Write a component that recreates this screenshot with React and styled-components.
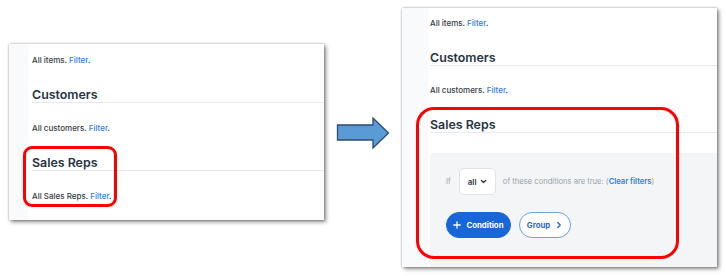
import React from 'react'
import styled, { createGlobalStyle } from 'styled-components'

const GlobalStyle = createGlobalStyle`
  html, body {
    margin: 0;
    padding: 0;
    background: #fff;
  }
  body {
    font-family: Inter, 'Liberation Sans', sans-serif;
    width: 726px;
    height: 276px;
    overflow: hidden;
  }
`

const Stage = styled.div`
  display: flex;
  align-items: flex-start;
  width: 726px;
  height: 276px;
`

const Shot = styled.div`
  position: relative;
  flex: none;
  display: flex;
  width: 315px;
  height: ${(p) => p.$h}px;
  margin: ${(p) => p.$top}px 0 0 ${(p) => p.$left}px;
  background: #fff;
  box-shadow: 2px 2px 4px rgba(0, 0, 0, 0.45), 0 0 2px rgba(0, 0, 0, 0.35);
  overflow: hidden;
`

const Gutter = styled.div`
  flex: none;
  width: ${(p) => p.$w}px;
  background: #f9fafb;
`

const Content = styled.div`
  flex: 1;
  display: flex;
  flex-direction: column;
  padding-top: ${(p) => p.$top}px;
  padding-left: ${(p) => p.$left}px;
`

const Desc = styled.div`
  font-size: 8px;
  line-height: 12px;
  font-weight: 500;
  color: #353c44;
  margin-top: ${(p) => p.$mt || 0}px;
  white-space: nowrap;
`

const Link = styled.span`
  color: #2f7de1;
  font-weight: ${(p) => (p.$bold ? 600 : 500)};
`

const Heading = styled.div`
  font-size: 12.4px;
  line-height: 15px;
  font-weight: 600;
  color: #263442;
  margin-top: 21px;
  border-bottom: 1px solid #e6eaee;
`

const FilterBox = styled.div`
  flex: 1;
  margin-top: 20px;
  padding: 15px 0 0 16px;
  background: #f3f5f6;
  border-top-left-radius: 4px;
  display: flex;
  flex-direction: column;
  gap: 17px;
`

const CondRow = styled.div`
  display: flex;
  align-items: center;
  gap: 7px;
  font-size: 7.6px;
  color: #9aa2aa;
  white-space: nowrap;
`

const Select = styled.div`
  width: 37px;
  height: 27px;
  box-sizing: border-box;
  display: flex;
  align-items: center;
  justify-content: space-between;
  padding: 0 8px 0 8px;
  margin-left: 1px;
  background: #fff;
  border: 1px solid #dfe4ea;
  border-radius: 5px;
  font-size: 7.8px;
  font-weight: 600;
  color: #2b333b;
`

const Buttons = styled.div`
  display: flex;
  gap: 8px;
`

const Pill = styled.div`
  height: 26px;
  box-sizing: border-box;
  display: flex;
  align-items: center;
  justify-content: center;
  gap: 5px;
  border-radius: 13px;
  font-size: 7.8px;
  font-weight: 700;
  width: ${(p) => p.$w}px;
  background: ${(p) => (p.$primary ? '#1866d8' : '#fff')};
  color: ${(p) => (p.$primary ? '#fff' : '#2d66c9')};
  border: 1px solid ${(p) => (p.$primary ? '#1866d8' : '#6f9ee6')};
`

const Highlight = styled.div`
  position: absolute;
  left: ${(p) => p.$x}px;
  top: ${(p) => p.$y}px;
  width: ${(p) => p.$w}px;
  height: ${(p) => p.$h}px;
  box-sizing: border-box;
  border: ${(p) => p.$b}px solid #ff0000;
  border-radius: ${(p) => p.$r}px;
`

const ArrowSvg = styled.svg`
  flex: none;
  margin: 116px 0 0 12px;
`

const Chevron = ({ dir = 'down', color, size = 7 }) => (
  <svg width={size} height={size} viewBox="0 0 10 10">
    <polyline
      points={dir === 'down' ? '2,3.5 5,6.5 8,3.5' : '3.5,2 6.5,5 3.5,8'}
      fill="none"
      stroke={color}
      strokeWidth="1.8"
      strokeLinecap="round"
      strokeLinejoin="round"
    />
  </svg>
)

const Plus = () => (
  <svg width="8" height="8" viewBox="0 0 10 10">
    <path d="M5 1v8M1 5h8" stroke="#fff" strokeWidth="1.6" strokeLinecap="round" />
  </svg>
)

const Arrow = () => (
  <ArrowSvg width="54" height="34" viewBox="0 0 54 34">
    <polygon
      points="1.5,9 37,9 37,2 52.5,17 37,32 37,24 1.5,24"
      fill="#5b9bd5"
      stroke="#2c4a72"
      strokeWidth="1.3"
      strokeLinejoin="miter"
    />
  </ArrowSvg>
)

export default function App() {
  return (
    <>
      <GlobalStyle />
      <Stage>
        <Shot $h={176} $top={44} $left={9}>
          <Gutter $w={19} />
          <Content $top={10} $left={4}>
            <Desc>
              All items. <Link>Filter</Link>.
            </Desc>
            <Heading>Customers</Heading>
            <Desc $mt={19}>
              All customers. <Link>Filter</Link>.
            </Desc>
            <Heading>Sales Reps</Heading>
            <Desc $mt={19}>
              All Sales Reps. <Link>Filter</Link>.
            </Desc>
          </Content>
          <Highlight $x={14} $y={102} $w={94} $h={61} $b={3} $r={9} />
        </Shot>

        <Arrow />

        <Shot $h={259} $top={8} $left={12}>
          <Gutter $w={26} />
          <Content $top={9} $left={2}>
            <Desc>
              All items. <Link>Filter</Link>.
            </Desc>
            <Heading>Customers</Heading>
            <Desc $mt={18}>
              All customers. <Link>Filter</Link>.
            </Desc>
            <Heading>Sales Reps</Heading>
            <FilterBox>
              <CondRow>
                <span>If</span>
                <Select>
                  all
                  <Chevron color="#2b333b" />
                </Select>
                <span>
                  of these conditions are true: (<Link $bold>Clear filters</Link>)
                </span>
              </CondRow>
              <Buttons>
                <Pill $primary $w={65}>
                  <Plus />
                  Condition
                </Pill>
                <Pill $w={52}>
                  Group
                  <Chevron dir="right" color="#2d66c9" size={8} />
                </Pill>
              </Buttons>
            </FilterBox>
          </Content>
          <Highlight $x={14} $y={99} $w={263} $h={152} $b={3.5} $r={18} />
        </Shot>
      </Stage>
    </>
  )
}
